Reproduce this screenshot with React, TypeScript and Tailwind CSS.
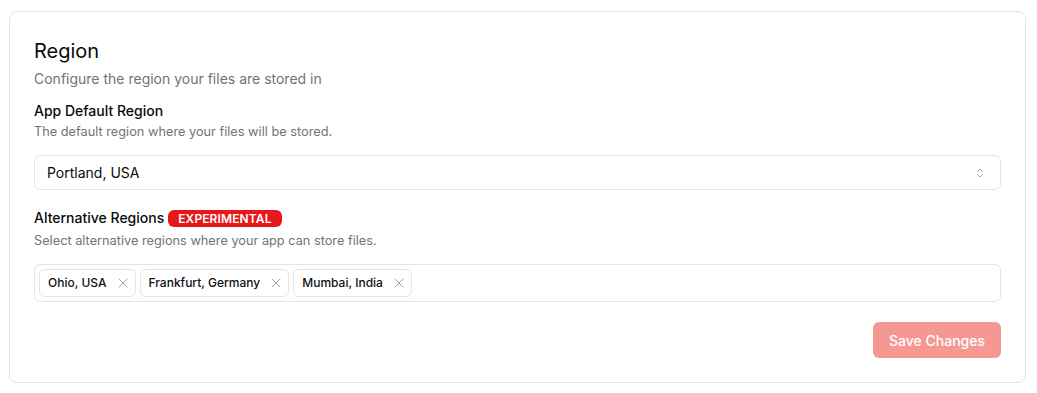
import React from "react";

const X = () => (
  <svg width="16" height="16" viewBox="0 0 24 24" fill="none" stroke="#a3a3a3" strokeWidth="1.5" strokeLinecap="round">
    <path d="M18 6 6 18M6 6l12 12" />
  </svg>
);

const Tag = ({ label }: { label: string }) => (
  <div className="flex items-center gap-[8px] h-[28px] pl-[8px] pr-[4px] border border-[#e5e5e5] rounded-[6px] text-[12px] font-medium text-[#111]">
    <span>{label}</span>
    <X />
  </div>
);

export default function App() {
  return (
    <div className="w-[1037px] h-[393px] bg-white pt-[11px] pl-[9px]" style={{ fontFamily: "Inter, 'Noto Sans', sans-serif" }}>
      <div className="w-[1017px] h-[372px] border border-[#e5e5e5] rounded-[8px] px-[24px] pt-[25px] flex flex-col">
        <h2 className="text-[20px] leading-[28px] text-[#0a0a0a] font-normal">Region</h2>
        <p className="text-[14px] leading-[20px] text-[#737373] mt-[4px]">Configure the region your files are stored in</p>
        <div className="text-[14px] leading-[20px] font-medium text-[#0a0a0a] mt-[12px]">App Default Region</div>
        <div className="text-[12.75px] leading-[16px] text-[#737373] mt-[3px]">The default region where your files will be stored.</div>
        <div className="mt-[15px] h-[35px] border border-[#e5e5e5] rounded-[6px] flex items-center justify-between pl-[12px] pr-[14px] text-[14px] text-[#0a0a0a]">
          <span>Portland, USA</span>
          <svg width="12" height="12" viewBox="0 0 24 24" fill="none" stroke="#9ca3af" strokeWidth="2" strokeLinecap="round" strokeLinejoin="round">
            <path d="m7 15 5 5 5-5" />
            <path d="m7 9 5-5 5 5" />
          </svg>
        </div>
        <div className="flex items-center gap-[4px] mt-[18px]">
          <span className="text-[14px] leading-[20px] font-medium text-[#0a0a0a]">Alternative Regions</span>
          <span className="bg-[#e7181b] text-white text-[12px] leading-[17px] font-semibold px-[10px] rounded-[6px] tracking-[0.01em]">EXPERIMENTAL</span>
        </div>
        <div className="text-[12.75px] leading-[16px] text-[#737373] mt-[5px]">Select alternative regions where your app can store files.</div>
        <div className="mt-[15px] h-[38px] border border-[#e5e5e5] rounded-[6px] flex items-center gap-[4px] px-[4px]">
          <Tag label="Ohio, USA" />
          <Tag label="Frankfurt, Germany" />
          <Tag label="Mumbai, India" />
        </div>
        <div className="flex justify-end mt-[20px]">
          <button className="h-[36px] w-[128px] rounded-[6px] bg-[#f69892] text-white text-[14px] font-medium">Save Changes</button>
        </div>
      </div>
    </div>
  );
}
